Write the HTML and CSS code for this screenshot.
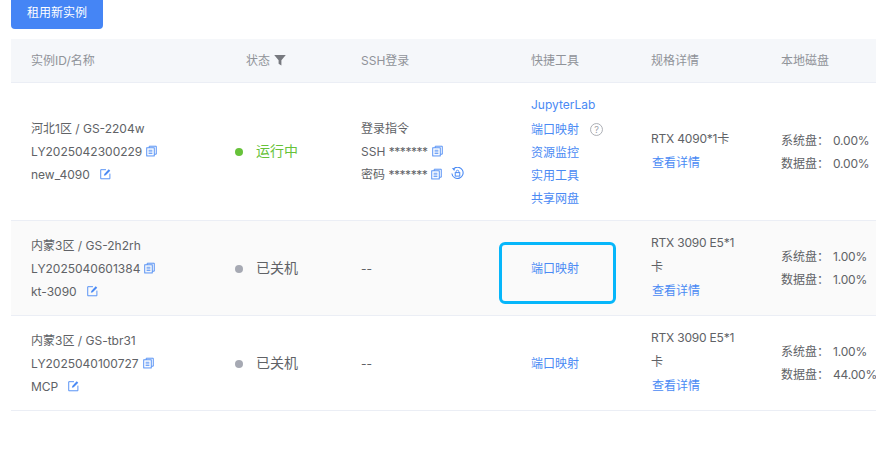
FILE: index.html
```html
<!DOCTYPE html>
<html lang="zh-CN">
<head>
<meta charset="utf-8">
<title>实例列表</title>
<link rel="stylesheet" href="styles.css">
</head>
<body>
<svg class="defs" width="0" height="0" aria-hidden="true">
  <symbol id="copy" viewBox="0 0 12 12">
    <path d="M3.5 2.5V.8h7.7v8.7H9.2" fill="none" stroke="currentColor"/>
    <rect x=".8" y="2.5" width="8.2" height="8.9" fill="none" stroke="currentColor"/>
    <path d="M2.8 5.2h4.2M2.8 7h4.2M2.8 8.8h4.2" stroke="currentColor" stroke-width=".9"/>
  </symbol>
  <symbol id="edit" viewBox="0 0 12 12">
    <path d="M6.5 1.3H.8v9.9h10V5.6" fill="none" stroke="currentColor"/>
    <path d="M4.2 7.9l.5-2L9.5.8l1.7 1.6-4.9 5z" fill="currentColor"/>
  </symbol>
</svg>
<main class="page">
  <button class="primary">租用新实例</button>
  <div class="table-wrap">
    <table class="grid">
      <colgroup>
        <col class="c1"><col class="c2"><col class="c3"><col class="c4"><col class="c5"><col class="c6">
      </colgroup>
      <thead>
        <tr>
          <th>实例ID/名称</th>
          <th class="th-status">状态 <svg class="filter" viewBox="0 0 12 12"><path d="M.2 1h11.6L7.4 6.2V11.6L4.6 9.8V6.2z" fill="currentColor"/></svg></th>
          <th>SSH登录</th>
          <th>快捷工具</th>
          <th>规格详情</th>
          <th>本地磁盘</th>
        </tr>
      </thead>
      <tbody>
        <tr class="tall">
          <td>
            <div>河北1区 / GS-2204w</div>
            <div>LY2025042300229<svg class="ico copy"><use href="#copy"/></svg></div>
            <div>new_4090<svg class="ico edit"><use href="#edit"/></svg></div>
          </td>
          <td class="status"><span class="dot on"></span><span class="on-text">运行中</span></td>
          <td>
            <div>登录指令</div>
            <div>SSH <span class="mask">*******</span><svg class="ico copy"><use href="#copy"/></svg></div>
            <div>密码 <span class="mask">*******</span><svg class="ico copy"><use href="#copy"/></svg><svg class="ico reset" viewBox="0 0 12 12"><path d="M2.2 1.8A5.2 5.2 0 1 1 .8 6" fill="none" stroke="currentColor"/><path d="M.8 1l3 .3-.8 2.4z" fill="currentColor"/><rect x="3.9" y="5.2" width="4.2" height="3.2" fill="none" stroke="currentColor" stroke-width=".9"/><path d="M4.8 5.2V4.2a1.2 1.2 0 0 1 2.4 0v1" fill="none" stroke="currentColor" stroke-width=".8"/></svg></div>
          </td>
          <td class="tools">
            <a>JupyterLab</a>
            <a class="port">端口映射<svg class="ico help" viewBox="0 0 12 12"><circle cx="6" cy="6" r="5.5" fill="none" stroke="currentColor" stroke-width=".8"/><text x="6" y="8.9" text-anchor="middle" class="help-q">?</text></svg></a>
            <a>资源监控</a>
            <a>实用工具</a>
            <a>共享网盘</a>
          </td>
          <td class="spec"><div class="spec-name">RTX 4090*1卡</div><a>查看详情</a></td>
          <td class="disk">
            <div>系统盘：<span class="val">0.00%</span></div>
            <div>数据盘：<span class="val">0.00%</span></div>
          </td>
        </tr>
        <tr class="short alt">
          <td>
            <div>内蒙3区 / GS-2h2rh</div>
            <div>LY2025040601384<svg class="ico copy"><use href="#copy"/></svg></div>
            <div>kt-3090<svg class="ico edit"><use href="#edit"/></svg></div>
          </td>
          <td class="status"><span class="dot"></span>已关机</td>
          <td>--</td>
          <td class="tools highlighted"><a>端口映射</a><span class="callout"></span></td>
          <td class="spec"><div class="spec-name">RTX 3090 E5*1卡</div><a>查看详情</a></td>
          <td class="disk">
            <div>系统盘：<span class="val">1.00%</span></div>
            <div>数据盘：<span class="val">1.00%</span></div>
          </td>
        </tr>
        <tr class="short">
          <td>
            <div>内蒙3区 / GS-tbr31</div>
            <div>LY2025040100727<svg class="ico copy"><use href="#copy"/></svg></div>
            <div>MCP<svg class="ico edit"><use href="#edit"/></svg></div>
          </td>
          <td class="status"><span class="dot"></span>已关机</td>
          <td>--</td>
          <td class="tools"><a>端口映射</a></td>
          <td class="spec"><div class="spec-name">RTX 3090 E5*1卡</div><a>查看详情</a></td>
          <td class="disk">
            <div>系统盘：<span class="val">1.00%</span></div>
            <div>数据盘：<span class="val">44.00%</span></div>
          </td>
        </tr>
      </tbody>
    </table>
  </div>
</main>
</body>
</html>
```

FILE: styles.css
```css
* { box-sizing: border-box; }
html, body { margin: 0; height: 100%; overflow: hidden; background: #fff; }
body { font: 12px/23px Inter, "Noto Sans CJK SC", sans-serif; color: #606266; }
.defs { position: absolute; }
.page { padding-left: 11px; }
.primary {
  display: block; width: 92px; height: 36px; margin-top: -7px; padding: 2px 0 0;
  border: 0; border-radius: 4px; background: #4585f5; color: #fff;
  font: inherit; font-size: 12px;
}
.table-wrap { margin-top: 10px; overflow: hidden; }
.grid { width: 880px; table-layout: fixed; border-collapse: separate; border-spacing: 0; }
.c1 { width: 216px; } .c2 { width: 114px; } .c3 { width: 170px; }
.c4 { width: 120px; } .c5 { width: 130px; } .c6 { width: 130px; }
th {
  height: 44px; padding: 0 0 0 20px; text-align: left; font-weight: 400;
  color: #909399; background: #f5f7fa; border-bottom: 1px solid #ebeef5;
}
.grid .th-status { padding-left: 19px; }
td { padding: 0 0 0 20px; border-bottom: 1px solid #ebeef5; vertical-align: middle; }
.tall td { height: 138px; }
.short td { height: 95px; }
.alt td { background: #fafafa; }
.filter { width: 12px; height: 12px; margin-left: 1px; vertical-align: -1px; color: #77797f; }
.ico { display: inline-block; width: 11px; height: 12px; color: #4a8af4; vertical-align: -1px; }
.copy { margin-left: 4px; }
.edit { margin-left: 10px; }
.reset { margin-left: 9px; width: 13px; height: 13px; }
.help { margin-left: 11px; width: 13px; height: 13px; vertical-align: -2px; color: #a0a3aa; }
.help-q { font-size: 8.5px; fill: currentColor; }
.mask { letter-spacing: -.45px; }
td.status { font-size: 14px; padding: 0 0 2px 8px; }
.dot { display: inline-block; width: 8px; height: 8px; margin-right: 13px; border-radius: 50%; background: #a6a9b3; vertical-align: 0; }
.dot.on { background: #67c23a; }
.on-text { color: #67c23a; }
a { color: #4a8af4; }
.tools a { display: block; }
.tools .port { margin: 2px 0 0; }
.highlighted { position: relative; }
.callout {
  position: absolute; left: -12px; top: 21px; width: 117px; height: 62px;
  border: 3px solid #06b6fa; border-radius: 6px;
}
td.spec { padding: 0 20px 2px 20px; line-height: 24px; }
.spec-name { letter-spacing: -.2px; }
.spec a { display: block; padding-left: 1px; }
.disk { white-space: nowrap; }
.val { margin-left: 4px; letter-spacing: -.2px; }
```
